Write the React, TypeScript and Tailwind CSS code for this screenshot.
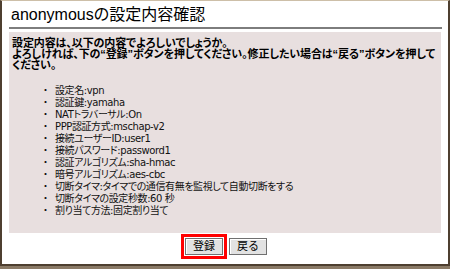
const items = [
  "設定名:vpn",
  "認証鍵:yamaha",
  "NATトラバーサル:On",
  "PPP認証方式:mschap-v2",
  "接続ユーザーID:user1",
  "接続パスワード:password1",
  "認証アルゴリズム:sha-hmac",
  "暗号アルゴリズム:aes-cbc",
  "切断タイマ:タイマでの通信有無を監視して自動切断をする",
  "切断タイマの設定秒数:60 秒",
  "割り当て方法:固定割り当て",
];

const btn =
  "h-[17px] w-[38px] p-0 bg-[#e2e2e2] border border-[#707070] shadow-[inset_1px_1px_0_#ffffff] text-[11px] leading-[13px] text-black";

export default function App() {
  return (
    <div
      className="w-[450px] h-[269px] bg-[#8a7a66] overflow-hidden"
      style={{ fontFamily: '"Liberation Sans", "Noto Sans CJK JP", sans-serif' }}
    >
      <div className="h-[266px] bg-white border-t border-t-[#cdbfa8] border-l-2 border-r-2 border-b-2 border-[#4e3f30] pl-[7px] pr-[6px] flex flex-col">
        {/* Title */}
        <div className="h-[28px] border-b-2 border-[#7d7d7d] pl-[2px] pt-[4px] text-[16px] leading-[20px] text-black [font-feature-settings:'palt']">
          anonymousの設定内容確認
        </div>

        {/* Confirm box */}
        <div className="mt-[3px] mr-[1px] bg-[#e8dfdf] h-[201px] pl-[3px] pt-[6px] text-[11px] text-black [font-feature-settings:'palt']">
          <p className="font-bold leading-[11px] tracking-[-0.1px] whitespace-nowrap">
            設定内容は、以下の内容でよろしいでしょうか。
            <br />
            よろしければ、下の“登録”ボタンを押してください。修正したい場合は“戻る”ボタンを押して
            <br />
            ください。
          </p>
          <ul
            className="mt-[14px] pl-[31px] leading-[12px] text-[10px] tracking-[-0.4px] text-[#111]"
            style={{ fontFamily: '"DejaVu Sans", "Noto Sans CJK JP", sans-serif' }}
          >
            {items.map((item) => (
              <li key={item} className="flex whitespace-nowrap">
                <span className="w-[12px]">・</span>
                <span>{item}</span>
              </li>
            ))}
          </ul>
        </div>

        {/* Buttons */}
        <div className="flex justify-center items-center gap-[2px] pt-[1px] pr-[3px]">
          <div className="border-[3px] border-[#ff0000] p-px flex">
            <button className={btn}>登録</button>
          </div>
          <button className={btn}>戻る</button>
        </div>
      </div>
    </div>
  );
}
